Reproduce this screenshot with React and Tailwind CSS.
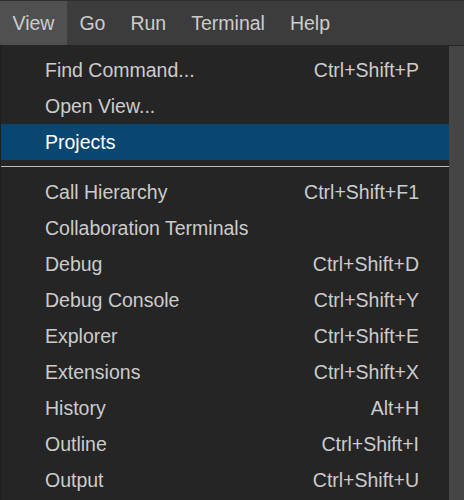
import React from 'react';

const MENUS = ['View', 'Go', 'Run', 'Terminal', 'Help'];

const TOP_ITEMS = [
  { label: 'Find Command...', keys: 'Ctrl+Shift+P' },
  { label: 'Open View...', keys: '' },
  { label: 'Projects', keys: '', active: true },
];

const ITEMS = [
  { label: 'Call Hierarchy', keys: 'Ctrl+Shift+F1' },
  { label: 'Collaboration Terminals', keys: '' },
  { label: 'Debug', keys: 'Ctrl+Shift+D' },
  { label: 'Debug Console', keys: 'Ctrl+Shift+Y' },
  { label: 'Explorer', keys: 'Ctrl+Shift+E' },
  { label: 'Extensions', keys: 'Ctrl+Shift+X' },
  { label: 'History', keys: 'Alt+H' },
  { label: 'Outline', keys: 'Ctrl+Shift+I' },
  { label: 'Output', keys: 'Ctrl+Shift+U' },
];

function MenuRow({ item }) {
  return (
    <div
      className={`flex items-center justify-between h-9 pt-px pl-[44px] pr-[30px] ${
        item.active ? 'bg-[#094771] text-white' : 'text-[#cccccc]'
      }`}
    >
      <span>{item.label}</span>
      {item.keys && <span>{item.keys}</span>}
    </div>
  );
}

export default function App() {
  return (
    <div
      className="w-[464px] h-[500px] overflow-hidden bg-[#252526] text-[19.5px] flex flex-col"
      style={{ fontFamily: '"Liberation Sans", Arial, sans-serif' }}
    >
      {/* Menu bar */}
      <div className="flex h-[45px] shrink-0 bg-[#3c3c3c] border-t border-[#2f2f2f] text-[#cccccc]">
        {MENUS.map((m, i) => (
          <div
            key={m}
            className={`flex items-center pt-[2px] px-[12.5px] ${i === 0 ? 'bg-[#505050]' : ''}`}
          >
            {m}
          </div>
        ))}
      </div>

      <div className="flex flex-1 min-h-0">
        {/* Dropdown */}
        <div className="w-[449px] shrink-0 bg-[#252526] border-l border-[#1e1e1e] pt-[7px]">
          {TOP_ITEMS.map((item) => (
            <MenuRow key={item.label} item={item} />
          ))}
          <div className="py-[6px]">
            <div className="h-px bg-[#bbbbbb]" />
          </div>
          <div className="pt-px">
            {ITEMS.map((item) => (
              <MenuRow key={item.label} item={item} />
            ))}
          </div>
        </div>
        <div className="flex-1 mt-px bg-[#454545]" />
      </div>
    </div>
  );
}
